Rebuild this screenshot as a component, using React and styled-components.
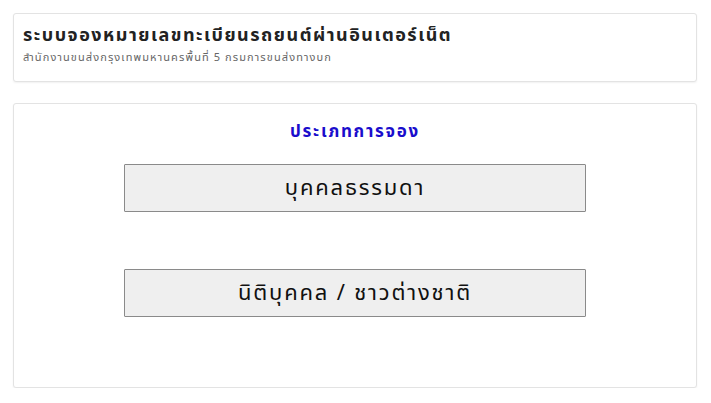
import React from 'react'
import styled, { createGlobalStyle } from 'styled-components'

const GlobalStyle = createGlobalStyle`
  html, body {
    margin: 0;
    padding: 0;
    background: #ffffff;
    font-family: Tahoma, "Noto Sans Thai", "Noto Sans", sans-serif;
  }
`

const Page = styled.div`
  width: 711px;
  padding: 13px 14px 0 13px;
  box-sizing: border-box;
  display: flex;
  flex-direction: column;
  gap: 21px;
`

const Card = styled.div`
  background: #fff;
  border: 1px solid #e3e3e3;
  border-radius: 3px;
  box-shadow: 0 1px 2px rgba(0, 0, 0, 0.06);
  box-sizing: border-box;
  height: ${(p) => p.height}px;
`

const HeaderCard = styled(Card)`
  padding: 9px 9px 7px;
`

const Title = styled.h1`
  margin: 0;
  font-size: 18px;
  font-weight: bold;
  letter-spacing: 1.5px;
  color: #222;
  line-height: 26px;
`

const Subtitle = styled.div`
  font-size: 11px;
  letter-spacing: 1.1px;
  color: #666;
  line-height: 16px;
  margin-top: 1px;
`

const BodyCard = styled(Card)`
  display: flex;
  flex-direction: column;
  align-items: center;
  padding-top: 16px;
`

const SectionTitle = styled.div`
  color: #1a0dcc;
  font-size: 17px;
  font-weight: bold;
  letter-spacing: 1.7px;
  line-height: 24px;
  margin-bottom: 20px;
`

const ChoiceButton = styled.button`
  width: 462px;
  height: 48px;
  background: #efefef;
  border: 1px solid #8a8a8a;
  border-radius: 1px;
  font-family: inherit;
  font-size: 22px;
  letter-spacing: 1.8px;
  color: #111;
  cursor: pointer;
  margin-bottom: ${(p) => p.gap || 0}px;
`

export default function App() {
  return (
    <>
      <GlobalStyle />
      <Page>
        <HeaderCard height={69}>
          <Title>ระบบจองหมายเลขทะเบียนรถยนต์ผ่านอินเตอร์เน็ต</Title>
          <Subtitle>สำนักงานขนส่งกรุงเทพมหานครพื้นที่ 5 กรมการขนส่งทางบก</Subtitle>
        </HeaderCard>
        <BodyCard height={285}>
          <SectionTitle>ประเภทการจอง</SectionTitle>
          <ChoiceButton gap={57}>บุคคลธรรมดา</ChoiceButton>
          <ChoiceButton>นิติบุคคล / ชาวต่างชาติ</ChoiceButton>
        </BodyCard>
      </Page>
    </>
  )
}
